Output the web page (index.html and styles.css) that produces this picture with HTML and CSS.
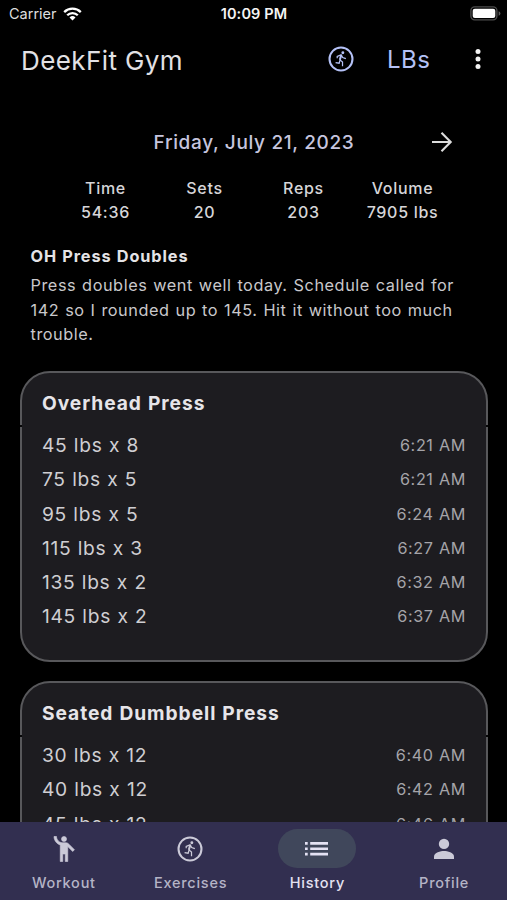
FILE: index.html
```html
<!DOCTYPE html>
<html lang="en">
<head>
<meta charset="utf-8">
<title>DeekFit Gym</title>
<link rel="stylesheet" href="styles.css">
</head>
<body>
<svg class="defs" width="0" height="0">
  <symbol id="runner" viewBox="0 0 24 24">
    <circle cx="12" cy="12" r="10.6" fill="none" stroke="currentColor" stroke-width="1.9"/>
    <circle cx="13.7" cy="6.200" r="1.35" fill="currentColor"/>
    <path d="M8.500 11.200V9.600l3.600-1.400 1.500 2.400 2.900 1M12.100 8.400l-1 4.400 2.300 2v3.900M11.200 12.600l-.9 3.300-3.300-.6" fill="none" stroke="currentColor" stroke-width="1.150"/>
    <path d="M12.200 8.200l-1.200 4.600" stroke="currentColor" stroke-width="1.8"/>
  </symbol>
</svg>
<div class="app">
  <header class="status">
    <div class="carrier"><span>Carrier</span>
      <svg width="19" height="14" viewBox="0 0 19 14" fill="none" stroke="#fff" stroke-width="2.3"><path d="M1.2 5.1a11.8 11.8 0 0 1 16.6 0M4.2 8.3a7.5 7.5 0 0 1 10.6 0"/><path d="M9.5 13.4L6.5 10.4a4.3 4.3 0 0 1 6 0z" fill="#fff" stroke="none"/></svg>
    </div>
    <div class="clock">10:09 PM</div>
    <svg class="battery" width="31" height="15" viewBox="0 0 31 15"><rect x=".9" y=".9" width="26" height="13" rx="3.8" fill="none" stroke="#4c4c4c" stroke-width="1.4"/><rect x="2.7" y="2.7" width="22.6" height="9.4" rx="2.1" fill="#fff"/><path d="M28.6 5.2q1.8 .5 1.8 2.3t-1.8 2.3z" fill="#5c5c5c"/></svg>
  </header>
  <div class="appbar">
    <h1>DeekFit Gym</h1>
    <svg class="run" width="26" height="26"><use href="#runner"/></svg>
    <span class="unit">LBs</span>
    <svg class="more" width="6" height="22" viewBox="0 0 6 22" fill="#f2f2f2"><circle cx="3" cy="3.6" r="2.5"/><circle cx="3" cy="11" r="2.5"/><circle cx="3" cy="18.4" r="2.5"/></svg>
  </div>
  <main class="content">
    <div class="date"><span>Friday, July 21, 2023</span>
      <svg width="22" height="22" viewBox="0 0 22 22" fill="none" stroke="#ddd" stroke-width="2.1"><path d="M1 11h18.500M10.500 1.800l9.200 9.200-9.200 9.200"/></svg>
    </div>
    <div class="stats">
      <div><b>Time</b><span>54:36</span></div>
      <div><b>Sets</b><span>20</span></div>
      <div><b>Reps</b><span>203</span></div>
      <div><b>Volume</b><span>7905 lbs</span></div>
    </div>
    <section class="note">
      <h2>OH Press Doubles</h2>
      <p>Press doubles went well today. Schedule called for<br>142 so I rounded up to 145. Hit it without too much<br>trouble.</p>
    </section>
    <section class="card">
      <h3>Overhead Press</h3>
      <ul>
        <li><span>45 lbs x 8</span><time>6:21 AM</time></li>
        <li><span>75 lbs x 5</span><time>6:21 AM</time></li>
        <li><span>95 lbs x 5</span><time>6:24 AM</time></li>
        <li><span>115 lbs x 3</span><time>6:27 AM</time></li>
        <li><span>135 lbs x 2</span><time>6:32 AM</time></li>
        <li><span>145 lbs x 2</span><time>6:37 AM</time></li>
      </ul>
    </section>
    <section class="card">
      <h3>Seated Dumbbell Press</h3>
      <ul>
        <li><span>30 lbs x 12</span><time>6:40 AM</time></li>
        <li><span>40 lbs x 12</span><time>6:42 AM</time></li>
        <li><span>45 lbs x 12</span><time>6:46 AM</time></li>
      </ul>
    </section>
  </main>
  <nav class="tabs">
    <a><i><svg class="person" width="30" height="30" viewBox="0 0 24 24" fill="currentColor" stroke="currentColor" stroke-width=".5"><circle cx="12" cy="4" r="2"/><path d="M15.890 8.110C15.500 7.720 14.830 7 13.530 7h-2.540C8.240 6.990 6 4.750 6 2H4c0 3.160 2.110 5.840 5 6.710V22h2v-6h2v6h2V10.050L18.950 14l1.410-1.410-4.470-4.480z"/></svg></i><span>Workout</span></a>
    <a><i><svg width="26" height="26"><use href="#runner"/></svg></i><span>Exercises</span></a>
    <a class="active"><i><svg width="23" height="14" viewBox="0 0 23 14" fill="currentColor"><path d="M0 0h2.700v2.700H0zM5.200 0H23v2.700H5.200zM0 5.400h2.700v2.700H0zM5.200 5.400H23v2.700H5.200zM0 10.800h2.700v2.700H0zM5.200 10.800H23v2.700H5.200z"/></svg></i><span>History</span></a>
    <a><i><svg width="22" height="22" viewBox="0 0 22 22" fill="currentColor"><circle cx="11" cy="5.900" r="5.200"/><path d="M1 21v-2.600c0-3.500 6.700-5.300 10-5.300s10 1.800 10 5.300V21z"/></svg></i><span>Profile</span></a>
  </nav>
</div>
</body>
</html>
```
FILE: styles.css
```css
* { box-sizing: border-box; margin: 0; padding: 0; }
body { background: #000; font-family: Inter, "Liberation Sans", sans-serif; color: #d6d5d8; }
.defs { display: block; }
.app { height: 900px; display: flex; flex-direction: column; overflow: hidden; }
.status { height: 27px; flex: none; display: grid; grid-template-columns: 1fr auto 1fr; align-items: center; padding: 0 6px 0 9px; }
.carrier { display: flex; align-items: center; gap: 6px; font-size: 14.5px; color: #dedede; }
.clock { font-size: 14.5px; font-weight: 600; letter-spacing: 0.15px; color: #f4f4f4; margin-right: 2px; }
.battery { justify-self: end; }
.appbar { height: 64px; flex: none; display: flex; align-items: center; padding: 0 26px 0 21px; }
h1 { font-size: 26px; font-weight: 400; letter-spacing: 0.4px; color: #e2e1e4; flex: 1; white-space: nowrap; padding-top: 3px; }
.run { color: #b4c1f6; margin-right: 33px; }
.unit { color: #b4c1f6; font-size: 24px; letter-spacing: 0.5px; width: 88px; }
.content { flex: 1; min-height: 0; overflow: hidden; padding: 0 19px 0 20px; }
.date { height: 24px; margin-top: 39px; display: grid; grid-template-columns: 1fr auto 1fr; align-items: center; font-size: 19px; font-weight: 500; letter-spacing: 0.65px; color: #c6c5df; }
.date span { grid-column: 2; }
.date svg { justify-self: end; margin-right: 35px; }
.stats { display: grid; grid-template-columns: repeat(4, 99px); justify-content: center; margin-top: 22px; text-align: center; font-size: 16px; line-height: 24px; letter-spacing: 0.7px; }
.stats b, .stats span { display: block; font-weight: 500; white-space: nowrap; }
.note { padding: 20px 10px 0 10.500px; }
.note h2 { font-size: 16.3px; line-height: 24px; font-weight: 700; letter-spacing: 0.9px; word-spacing: 0.5px; color: #e4e3e6; }
.note p { margin-top: 5px; font-size: 16.3px; line-height: 24.500px; letter-spacing: 0.55px; word-spacing: 0.8px; color: #c9c8cb; white-space: nowrap; }
.card { margin-top: 24px; border: 2px solid #58585b; border-radius: 30px; background: #1d1c20; height: 291px; padding: 0 20px; position: relative; }
.card + .card { margin-top: 19px; }
.card::before, .card::after { content: ""; position: absolute; top: 52px; width: 2px; height: 2px; background: #060607; }
.card::before { left: -2px; }
.card::after { right: -2px; }
h3 { font-size: 19.200px; font-weight: 700; line-height: 24px; letter-spacing: 0.95px; word-spacing: 0.500px; color: #e6e5e9; padding-top: 18px; white-space: nowrap; }
ul { list-style: none; margin-top: 13.700px; }
li { height: 34.200px; display: flex; justify-content: space-between; align-items: center; font-size: 19.200px; letter-spacing: 0.7px; word-spacing: 0.3px; color: #cfced2; }
time { font-size: 16.200px; letter-spacing: 0.6px; color: #a5a4a9; }
.tabs { height: 78px; flex: none; background: #322f50; display: grid; grid-template-columns: repeat(4, 1fr); color: #cbcad8; }
.tabs a { display: flex; flex-direction: column; align-items: center; padding-top: 7px; }
.tabs i { width: 78px; height: 39px; border-radius: 20px; display: flex; align-items: center; justify-content: center; }
.tabs .person { margin-left: 2px; }
.tabs span { font-size: 14.500px; font-weight: 500; letter-spacing: 0.75px; line-height: 20px; margin-top: 5px; padding-left: 1px; color: #b5b4c6; }
.tabs .active { color: #e4e2f4; }
.tabs .active i { background: #40475b; }
.tabs .active span { color: #e4e2f0; }
```
